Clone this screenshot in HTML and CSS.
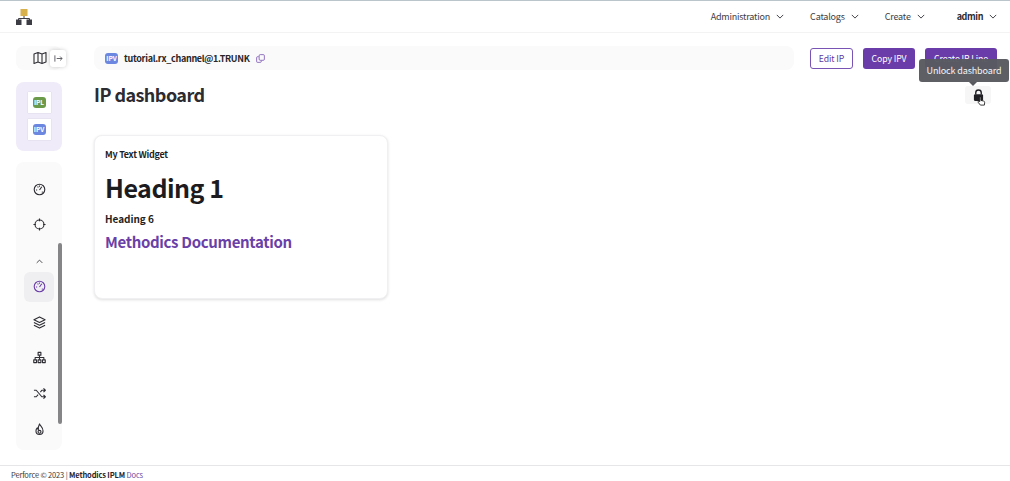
FILE: index.html
```html
<!DOCTYPE html>
<html lang="en">
<head>
<meta charset="utf-8">
<title>IP dashboard</title>
<link rel="stylesheet" href="styles.css">
</head>
<body>
<header class="topbar">
  <svg class="logo" viewBox="0 0 16 16" width="16" height="16"><rect x="4.500" y="0" width="7" height="7" fill="#d8b04c"/><path d="M8 7v2.500M2.500 12V9.500h11V12" fill="none" stroke="#3c3c44" stroke-width="1"/><rect x="0" y="10.500" width="5.500" height="5.500" fill="#3c3c44"/><rect x="10.500" y="10.500" width="5.500" height="5.500" fill="#3c3c44"/></svg>
  <nav class="menu">
    <span class="menu-item m1">Administration <svg class="chev" viewBox="0 0 10 6"><path d="M1 1l4 4 4-4"/></svg></span>
    <span class="menu-item m2">Catalogs <svg class="chev" viewBox="0 0 10 6"><path d="M1 1l4 4 4-4"/></svg></span>
    <span class="menu-item m3">Create <svg class="chev" viewBox="0 0 10 6"><path d="M1 1l4 4 4-4"/></svg></span>
    <span class="menu-item user">admin <svg class="chev" viewBox="0 0 10 6"><path d="M1 1l4 4 4-4"/></svg></span>
  </nav>
</header>
<div class="main">
  <aside class="rail">
    <div class="rail-toggle">
      <svg class="ico" viewBox="0 0 14 14" width="14" height="14"><path d="M1 3l4-1.500 4 1.500 4-1.500v9.500l-4 1.500-4-1.500-4 1.500zM5 1.500v9.500M9 3v9.500" fill="none" stroke="#2e2e34" stroke-width="1.100" stroke-linejoin="round"/></svg>
      <span class="collapse"><svg viewBox="0 0 10 10" width="9" height="9"><path d="M1 1.500v7M3 5h6M6.800 2.800L9 5 6.800 7.200" fill="none" stroke="#55555c" stroke-width="1"/></svg></span>
    </div>
    <div class="rail-types">
      <span class="type-tile"><span class="tag tag-ipl">IPL</span></span>
      <span class="type-tile"><span class="tag tag-ipv">IPV</span></span>
    </div>
    <div class="rail-nav">
      <span class="nav-item first"><svg viewBox="0 0 14 14" width="13" height="13"><circle cx="7" cy="7" r="5.700"/><path d="M7 7.500l2.500-3.500M3.200 7.500h1.300M5 3.800l.7 1M9.500 9.800h1M7 2.800v1.200"/></svg></span>
      <span class="nav-item"><svg viewBox="0 0 14 14" width="13" height="13"><circle cx="7" cy="7" r="4.800"/><path d="M7 .5v3M7 10.500v3M.5 7h2.500M11 7h2.500"/></svg></span>
      <span class="nav-chev"><svg viewBox="0 0 10 6" width="7" height="5"><path d="M1 5l4-4 4 4"/></svg></span>
      <span class="nav-item active"><svg viewBox="0 0 14 14" width="13" height="13"><circle cx="7" cy="7" r="5.700"/><path d="M7 7.500l2.500-3.500M3.200 7.500h1.300M5 3.800l.7 1M9.500 9.800h1M7 2.800v1.200"/></svg></span>
      <span class="nav-item"><svg viewBox="0 0 14 14" width="13" height="13"><path d="M7 1l6 3-6 3-6-3zM1 7l6 3 6-3M1 10l6 3 6-3"/></svg></span>
      <span class="nav-item"><svg viewBox="0 0 14 14" width="13" height="13"><rect x="5.500" y="1.500" width="3" height="3"/><rect x=".8" y="9.500" width="3" height="3"/><rect x="5.500" y="9.500" width="3" height="3"/><rect x="10.200" y="9.500" width="3" height="3"/><path d="M7 4.500v5M2.300 9.500V7h9.400v2.500"/></svg></span>
      <span class="nav-item"><svg viewBox="0 0 14 14" width="13" height="13"><path d="M1 3.500h2.500l6 7H13M1 10.500h2.500l2-2.300M8 5.500l1.500-2H13M11.300 1.500l2 2-2 2M11.300 8.500l2 2-2 2"/></svg></span>
      <span class="nav-item"><svg viewBox="0 0 14 14" width="13" height="13"><path d="M7 1c.5 2 3.800 3.500 3.800 7.500a3.800 3.800 0 0 1-7.600 0c0-1.500.7-2.500 1.400-3.200.2 1 .7 1.500 1.200 1.700C5.600 5 6 2.800 7 1z"/><circle cx="7" cy="9.500" r="1.600"/></svg></span>
      <span class="scrollbar"></span>
    </div>
  </aside>
  <section class="content">
    <div class="toolbar">
      <div class="crumb">
        <span class="tag tag-ipv">IPV</span>
        <span class="crumb-name">tutorial.rx_channel@1.TRUNK</span>
        <svg class="copy" viewBox="0 0 10 10" width="9" height="9"><rect x="3.500" y=".7" width="5.800" height="6.300" rx="1.200"/><path d="M3 3H1.800A1.100 1.100 0 0 0 .7 4.100v4A1.100 1.100 0 0 0 1.800 9.300h3A1.100 1.100 0 0 0 5.900 8.200V7.500"/></svg>
      </div>
      <span class="btn btn-outline">Edit IP</span>
      <span class="btn btn-solid b-copy">Copy IPV</span>
      <span class="btn btn-solid b-create">Create IP Line</span>
    </div>
    <div class="title-row">
      <h1 class="title">IP dashboard</h1>
      <span class="lock-btn"><svg viewBox="0 0 12 14" width="11" height="13"><path d="M3 6V4a3 3 0 0 1 6 0v2" fill="none" stroke="#1f1f24" stroke-width="1.500"/><rect x="1" y="5.500" width="10" height="7.500" rx="1.500" fill="#1f1f24"/></svg></span>
    </div>
    <article class="card">
      <div class="card-label">My Text Widget</div>
      <h2 class="h-one">Heading 1</h2>
      <h6 class="h-six">Heading 6</h6>
      <div class="doc-link">Methodics Documentation</div>
    </article>
  </section>
</div>
<footer class="footer">Perforce © 2023 | <b>Methodics IPLM</b> <span class="docs">Docs</span></footer>
<div class="tooltip">Unlock dashboard</div>
<svg class="cursor" viewBox="0 0 10 12" width="9" height="11"><path d="M3 1.200c.7-.5 1.300 0 1.300.6v3l3 .7c.8.2 1.300.8 1.200 1.700L8.200 10H3.800L1.200 6.800c-.5-.8.500-1.500 1.300-.8l.5.500z" fill="#fff" stroke="#111" stroke-width=".9"/></svg>
</body>
</html>
```
FILE: styles.css
```css
* { box-sizing: border-box; }
html, body { margin: 0; height: 100%; }
body {
  position: relative;
  width: 1010px;
  height: 481px;
  overflow: hidden;
  display: flex;
  flex-direction: column;
  background: #fff;
  color: #2b2b31;
  font-family: "Noto Sans CJK SC", "Noto Sans", sans-serif;
}
.topbar {
  flex: none;
  height: 33px;
  border-top: 1px solid #b9c5ca;
  border-bottom: 1px solid #f3f3f4;
  display: flex;
  align-items: center;
  justify-content: space-between;
  padding: 0 13px 0 16px;
}
.logo { display: block; margin-top: 1px; }
.menu { display: flex; align-items: center; font-size: 9px; letter-spacing: -.2px; color: #3d3d44; }
.menu-item { display: flex; align-items: center; gap: 6px; }
.m1 { margin-right: 26px; }
.m2 { margin-right: 26px; }
.m3 { margin-right: 32px; }
.user { font-weight: 700; color: #2b2b31; letter-spacing: -.4px; }
.chev { width: 8px; height: 5px; fill: none; stroke: #3d3d44; stroke-width: 1.200; }
.main { flex: 1; min-height: 0; display: flex; gap: 32px; padding: 13px 13px 0 16px; }
.rail { flex: none; width: 46px; display: flex; flex-direction: column; }
.rail-toggle {
  height: 24px;
  border-radius: 8px;
  background: #fafafa;
  display: flex;
  align-items: center;
  padding-left: 17px;
  gap: 3px;
}
.ico { display: block; flex: none; }
.collapse {
  width: 16px;
  height: 17px;
  flex: none;
  border-radius: 3px;
  background: #fff;
  box-shadow: 0 0 4px rgba(0,0,0,.2);
  display: flex;
  align-items: center;
  justify-content: center;
}
.rail-types {
  margin-top: 12px;
  height: 69px;
  border-radius: 8px;
  background: #f0ebf8;
  display: flex;
  flex-direction: column;
  align-items: center;
  padding-top: 10px;
  gap: 6px;
}
.type-tile {
  width: 23px;
  height: 21px;
  background: #fff;
  box-shadow: 0 0 1px rgba(0,0,0,.2);
  display: flex;
  align-items: center;
  justify-content: center;
}
.tag {
  width: 13px;
  height: 11px;
  border-radius: 3px;
  color: #fff;
  font-size: 6.500px;
  font-weight: 700;
  line-height: 11px;
  text-align: center;
  flex: none;
}
.tag-ipl { background: #6b9a4a; }
.tag-ipv { background: #6b87e0; }
.rail-nav {
  position: relative;
  margin-top: 11px;
  height: 288px;
  border-radius: 8px;
  background: #fafafa;
  display: flex;
  flex-direction: column;
  align-items: center;
}
.nav-item {
  width: 30px;
  height: 30px;
  flex: none;
  margin-bottom: 5.700px;
  border-radius: 6px;
  display: flex;
  align-items: center;
  justify-content: center;
}
.nav-item svg { fill: none; stroke: #2e2e34; stroke-width: 1.200; stroke-linejoin: round; }
.first { margin-top: 12px; }
.nav-chev { height: 12px; margin: 11px 0 4px; display: flex; align-items: center; }
.nav-chev svg { fill: none; stroke: #2e2e34; stroke-width: 1.200; }
.active { background: #efeff1; }
.active svg { stroke: #6b3fa8; }
.scrollbar {
  position: absolute;
  right: 0;
  top: 81px;
  width: 4px;
  height: 181px;
  border-radius: 2px;
  background: #858588;
}
.content { flex: 1; min-width: 0; display: flex; flex-direction: column; }
.toolbar { height: 24px; display: flex; align-items: center; }
.crumb {
  width: 700px;
  height: 24px;
  margin-right: 16px;
  border-radius: 8px;
  background: #fafafa;
  display: flex;
  align-items: center;
  padding-left: 11px;
  gap: 6px;
}
.crumb-name { font-size: 9px; letter-spacing: -.3px; font-weight: 700; color: #26262b; }
.copy { fill: none; stroke: #7a54b5; stroke-width: .9; }
.btn {
  height: 21px;
  border-radius: 3px;
  font-size: 8.700px;
  letter-spacing: -.1px;
  display: flex;
  align-items: center;
  justify-content: center;
  flex: none;
}
.btn-outline { width: 43px; margin-right: 10px; border: 1px solid #7a54b5; color: #5f3a9e; background: #fff; }
.btn-solid { background: #6a3caa; color: #fff; }
.b-copy { width: 52px; margin-right: 10px; }
.b-create { width: 72px; }
.title-row { display: flex; align-items: flex-start; justify-content: space-between; margin-top: 11px; height: 54px; padding-right: 6px; }
.title { margin: 0; font-size: 18px; letter-spacing: -.55px; font-weight: 700; line-height: 26px; color: #2b2b31; }
.lock-btn {
  width: 26px;
  height: 18px;
  border-radius: 3px;
  background: #f6f6f7;
  display: flex;
  align-items: center;
  justify-content: center;
  margin-top: 5px;
}
.card {
  width: 294px;
  height: 164px;
  border: 1px solid #f0f0f2;
  border-radius: 8px;
  box-shadow: 0 1px 3px rgba(0,0,0,.13);
  background: #fff;
  padding: 12px 10px;
}
.card-label { font-size: 9px; letter-spacing: -.25px; font-weight: 700; line-height: 14px; color: #1f1f24; }
.h-one { margin: 7px 0 0; font-size: 25px; letter-spacing: -.5px; font-weight: 700; line-height: 36px; color: #1b1b20; }
.h-six { margin: 6px 0 0; font-size: 10px; letter-spacing: -.05px; font-weight: 700; line-height: 16px; color: #1f1f24; }
.doc-link { margin-top: 4px; font-size: 15px; letter-spacing: -.33px; font-weight: 700; line-height: 22px; color: #6a3fa8; }
.footer {
  flex: none;
  height: 16px;
  border-top: 1px solid #e6e6e8;
  font-size: 7.500px;
  letter-spacing: -.15px;
  line-height: 17px;
  padding-left: 11px;
  color: #3a3a40;
}
.footer b { font-weight: 700; color: #26262b; }
.docs { color: #6a4aa8; }
.tooltip {
  position: absolute;
  left: 919px;
  top: 59px;
  width: 90px;
  height: 23px;
  border-radius: 3px;
  background: rgba(88,90,96,.97);
  color: #f4f4f5;
  font-size: 9px;
  letter-spacing: -.12px;
  line-height: 23px;
  text-align: center;
}
.tooltip::after {
  content: "";
  position: absolute;
  left: 50px;
  top: 23px;
  border: 4px solid transparent;
  border-top-color: #585a60;
  border-bottom: 0;
}
.cursor { position: absolute; left: 977px; top: 96px; }
```
